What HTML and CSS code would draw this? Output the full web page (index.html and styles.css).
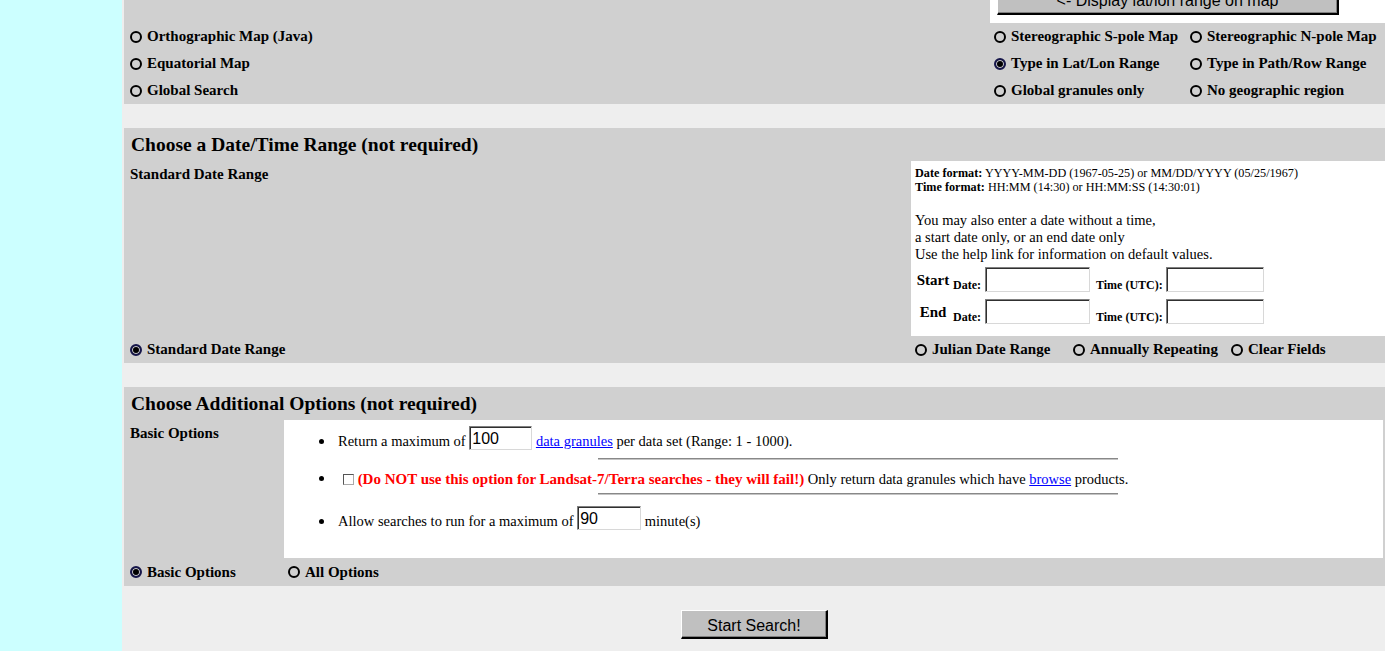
FILE: index.html
```html
<!DOCTYPE html>
<html lang="en">
<head>
<meta charset="utf-8">
<title>Search</title>
<link rel="stylesheet" href="styles.css">
</head>
<body>
<div class="layout">
  <div class="side"></div>
  <main class="main">
    <section class="sec sec-map">
      <div class="map-top-left"></div>
      <div class="map-btn-cell"><button type="button" class="btn btn-display">&lt;- Display lat/lon range on map</button></div>

      <label class="opt"><input type="radio" name="geo" class="rb">Orthographic Map (Java)</label>
      <label class="opt opt-r"><input type="radio" name="geo" class="rb">Stereographic S-pole Map</label>
      <label class="opt opt-r"><input type="radio" name="geo" class="rb">Stereographic N-pole Map</label>

      <label class="opt"><input type="radio" name="geo" class="rb">Equatorial Map</label>
      <label class="opt opt-r"><input type="radio" name="geo" class="rb" checked>Type in Lat/Lon Range</label>
      <label class="opt opt-r"><input type="radio" name="geo" class="rb">Type in Path/Row Range</label>

      <label class="opt"><input type="radio" name="geo" class="rb">Global Search</label>
      <label class="opt opt-r"><input type="radio" name="geo" class="rb">Global granules only</label>
      <label class="opt opt-r"><input type="radio" name="geo" class="rb">No geographic region</label>
    </section>

    <section class="sec">
      <h3 class="sec-title">Choose a Date/Time Range (not required)</h3>
      <div class="date-grid">
        <div class="cell-label">Standard Date Range</div>
        <div class="date-box">
          <p class="fmt"><b>Date format:</b> YYYY-MM-DD (1967-05-25) or MM/DD/YYYY (05/25/1967)<br><b>Time format:</b> HH:MM (14:30) or HH:MM:SS (14:30:01)</p>
          <p class="note">You may also enter a date without a time,<br>a start date only, or an end date only<br>Use the help link for information on default values.</p>
          <div class="dt-grid">
            <span class="dt-main">Start</span>
            <span class="dt-sub dt-sub-date">Date:</span>
            <input type="text" class="txt txt-date">
            <span class="dt-sub dt-sub-time">Time (UTC):</span>
            <input type="text" class="txt txt-time">

            <span class="dt-main">End</span>
            <span class="dt-sub dt-sub-date">Date:</span>
            <input type="text" class="txt txt-date">
            <span class="dt-sub dt-sub-time">Time (UTC):</span>
            <input type="text" class="txt txt-time">
          </div>
        </div>
        <label class="opt"><input type="radio" name="date" class="rb" checked>Standard Date Range</label>
        <div class="date-alt">
          <label class="opt opt-r"><input type="radio" name="date" class="rb">Julian Date Range</label>
          <label class="opt opt-r"><input type="radio" name="date" class="rb">Annually Repeating</label>
          <label class="opt opt-r"><input type="radio" name="date" class="rb">Clear Fields</label>
        </div>
      </div>
    </section>

    <section class="sec">
      <h3 class="sec-title">Choose Additional Options (not required)</h3>
      <div class="opt-grid">
        <div class="cell-label">Basic Options</div>
        <div class="opt-box">
          <ul class="opt-list">
            <li class="li li-short"><div class="li-body">Return a maximum of <input type="text" class="txt txt-inline txt-num" value="100"> <a href="#" class="lnk">data granules</a> per data set (Range: 1 - 1000).</div></li>
            <li class="li li-mid">
              <div class="li-body">
                <hr class="rule">
                <div class="chk-line"><input type="checkbox" class="chk"> <span class="warn">(Do NOT use this option for Landsat-7/Terra searches - they will fail!)</span> Only return data granules which have <a href="#" class="lnk">browse</a> products.</div>
                <hr class="rule">
              </div>
            </li>
            <li class="li li-short li-last"><div class="li-body">Allow searches to run for a maximum of <input type="text" class="txt txt-inline txt-min" value="90"> minute(s)</div></li>
          </ul>
        </div>
        <label class="opt opt-bottom"><input type="radio" name="mode" class="rb" checked>Basic Options</label>
        <label class="opt opt-r opt-bottom"><input type="radio" name="mode" class="rb">All Options</label>
      </div>
    </section>

    <div class="actions">
      <button type="submit" class="btn btn-search">Start Search!</button>
    </div>
  </main>
</div>
</body>
</html>
```

FILE: styles.css
```css
* {
  box-sizing: border-box;
}

html,
body {
  margin: 0;
  padding: 0;
}

body {
  font-family: "Liberation Serif", "Times New Roman", serif;
  font-size: 14.5px;
  color: #000;
  background: #eeeeee;
}

.layout {
  display: flex;
  min-height: 100vh;
}

.side {
  width: 122px;
  flex: none;
  background: #ccffff;
}

.main {
  flex: 1;
  min-width: 0;
  padding-left: 2px;
  background: #eeeeee;
  overflow: hidden;
}

.sec {
  background: #d0d0d0;
  margin-top: 24px;
}

/* ---------- map section ---------- */
.sec-map {
  margin-top: -18px;
  display: grid;
  grid-template-columns: 1fr 196px 199px;
  grid-template-rows: 41px repeat(3, 27px);
}

.map-btn-cell {
  grid-column: 2 / 4;
  background: #fff;
  padding: 6px 0 0 7px;
}

/* ---------- radio options ---------- */
.opt {
  display: flex;
  align-items: center;
  gap: 5px;
  height: 27px;
  padding-left: 6px;
  font-weight: bold;
  font-size: 15px;
  white-space: nowrap;
}

.opt-r {
  padding-left: 4px;
}

.opt-bottom {
  height: 28px;
}

.rb {
  appearance: none;
  -webkit-appearance: none;
  width: 12px;
  height: 12px;
  margin: 0;
  border: 2px solid #000;
  border-radius: 50%;
  background: transparent;
  flex: none;
}

.rb:checked {
  border-color: #16164a;
  background: #000;
  box-shadow: inset 0 0 0 1px #c8c8d0;
}

/* ---------- buttons ---------- */
.btn {
  font-family: "Liberation Sans", Arial, sans-serif;
  font-size: 16px;
  color: #000;
  background: #c0c0c0;
  border-style: solid;
  border-width: 1px 2px 2px 1px;
  border-color: #fff #000 #000 #fff;
  box-shadow: inset -1px -1px 0 #808080;
  padding: 0;
  margin: 0;
}

.btn-display {
  display: block;
  width: 342px;
  height: 27px;
}

.btn-search {
  width: 147px;
  height: 29px;
  padding-top: 3px;
}

.actions {
  display: flex;
  justify-content: center;
  padding-top: 24px;
}

/* ---------- section titles / labels ---------- */
.sec-title {
  margin: 0;
  height: 33px;
  line-height: 33px;
  padding-left: 7px;
  font-size: 19.5px;
  font-weight: bold;
}

.cell-label {
  padding: 4px 6px;
  line-height: 18px;
  font-weight: bold;
  font-size: 15px;
}

/* ---------- date section ---------- */
.date-grid {
  display: grid;
  grid-template-columns: 1fr 474px;
}

.date-box {
  background: #fff;
  padding: 5px 4px 12px;
}

.fmt {
  margin: 0;
  font-size: 12.2px;
  line-height: 14px;
}

.note {
  margin: 17.5px 0 0;
  line-height: 17px;
}

.dt-grid {
  display: grid;
  grid-template-columns: 36px 34px 105px 76px 98px;
  grid-template-rows: 25px 25px;
  row-gap: 7px;
  margin-top: 4.5px;
  align-items: center;
}

.dt-main {
  text-align: center;
  font-weight: bold;
  font-size: 15px;
  padding-top: 1px;
}

.dt-sub {
  font-weight: bold;
  font-size: 12px;
  padding-top: 12px;
  white-space: nowrap;
}

.dt-sub-date {
  padding-left: 2px;
}

.dt-sub-time {
  padding-left: 6px;
}

.date-alt {
  display: grid;
  grid-template-columns: repeat(3, 1fr);
}

/* ---------- text inputs ---------- */
.txt {
  font-family: "Liberation Sans", Arial, sans-serif;
  font-size: 16px;
  height: 24px;
  margin: 0;
  padding: 0 2px;
  border: 1px solid;
  border-color: #808080 #d8d8d8 #d8d8d8 #808080;
  box-shadow: inset 1px 1px 0 #303030;
  background: #fff;
  vertical-align: baseline;
  color: #000;
}

.txt-inline {
  padding-top: 2px;
  vertical-align: 2px;
}

.txt-num {
  width: 63px;
}

.txt-min {
  width: 64px;
}

.txt-date {
  width: 105px;
  height: 25px;
}

.txt-time {
  width: 98px;
  height: 25px;
}

/* ---------- options section ---------- */
.opt-grid {
  display: grid;
  grid-template-columns: 160px 1fr;
  padding-right: 2px;
}

.opt-box {
  background: #fff;
  padding: 6px 5px 28px 0;
}

.opt-list {
  list-style: none;
  margin: 0;
  padding: 0;
}

.li {
  display: flex;
  align-items: flex-start;
}

.li::before {
  content: "";
  flex: none;
  width: 5px;
  height: 5px;
  border-radius: 50%;
  background: #000;
  margin: 13px 14px 0 35px;
}

.li-short {
  height: 24px;
}

.li-mid {
  margin-top: 8px;
}

.li-mid::before {
  margin-top: 18px;
}

.li-last {
  margin-top: 11px;
}

.li-body {
  flex: 1;
  min-width: 0;
  white-space: nowrap;
}

.rule {
  width: 50%;
  height: 0;
  margin: 0 auto;
  border: 0;
  border-top: 1px solid #888;
  border-bottom: 1px solid #c4c4c4;
}

.chk-line {
  margin: 10px 0 5px;
  line-height: 18px;
}

.chk {
  appearance: none;
  -webkit-appearance: none;
  width: 11px;
  height: 11px;
  margin: 0 0 0 5px;
  border: 1px solid;
  border-color: #555 #aaa #aaa #555;
  background: #fff;
  vertical-align: -1px;
}

.warn {
  color: #f00;
  font-weight: bold;
  font-size: 15px;
}

.lnk {
  color: #0000ff;
  text-decoration: underline;
}
```
